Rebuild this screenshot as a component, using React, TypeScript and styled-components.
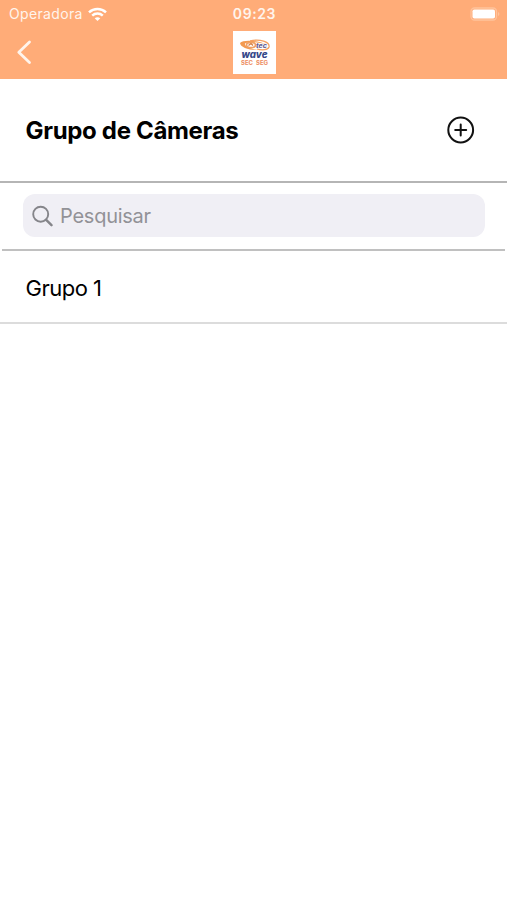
import React from "react";
import styled, { createGlobalStyle } from "styled-components";

const GlobalStyle = createGlobalStyle`
  * { box-sizing: border-box; }
  html, body, #root { margin: 0; height: 100%; background: #fff; }
  body { font-family: Inter, "Liberation Sans", sans-serif; color: #000; }
  svg { display: block; }
  button { border: 0; padding: 0; background: none; color: inherit; }
`;

const Screen = styled.div`
  display: flex;
  flex-direction: column;
  width: 100%;
  min-height: 100%;
  background: #fff;
`;

const Header = styled.header`
  height: 79px;
  flex: none;
  background: #ffac78;
  color: #fff4ec;
`;

const StatusBar = styled.div`
  display: grid;
  grid-template-columns: 1fr auto 1fr;
  align-items: center;
  height: 28px;
  padding: 0 7px 0 9px;
`;

const Carrier = styled.div`
  display: flex;
  align-items: center;
  gap: 5px;
  font-size: 14px;
  letter-spacing: 0.35px;
  line-height: 28px;
  white-space: nowrap;
`;

const Clock = styled.div`
  padding-bottom: 2px;
  font-size: 14px;
  font-weight: 600;
  letter-spacing: 0.6px;
`;

const BatterySlot = styled.div`
  display: flex;
  justify-content: flex-end;
  padding-bottom: 1px;
`;

const NavBar = styled.nav`
  display: grid;
  grid-template-columns: 1fr auto 1fr;
  height: 51px;
  padding: 3px 16px 0;
`;

const BackButton = styled.button`
  justify-self: start;
  align-self: start;
  margin-top: 8px;
`;

const Logo = styled.div`
  width: 43px;
  height: 43px;
  margin-left: 1px;
  background: #fff;
`;

const TitleRow = styled.section`
  display: flex;
  align-items: center;
  justify-content: space-between;
  height: 104px;
  padding: 0 32px 1px 25.5px;
  border-bottom: 2px solid #b5b5b5;
`;

const Title = styled.h1`
  margin: 0;
  padding-top: 2px;
  font-size: 24px;
  font-weight: 700;
  letter-spacing: -0.32px;
  line-height: 30px;
`;

const SearchArea = styled.div`
  height: 68px;
  margin: 0 2px;
  padding: 11px 20px 0 21px;
  border-bottom: 2px solid #c0c0c0;
`;

const SearchField = styled.label`
  display: flex;
  align-items: center;
  gap: 7px;
  height: 43px;
  padding-left: 9px;
  border-radius: 12px;
  background: #f0eff5;
  color: #85858a;
`;

const Placeholder = styled.span`
  padding-top: 1px;
  font-size: 20px;
  letter-spacing: -0.25px;
  color: #929297;
`;

const GroupRow = styled.div`
  display: flex;
  align-items: center;
  height: 73px;
  padding: 2px 25.5px 0;
  border-bottom: 2px solid #dcdcdc;
  font-size: 22px;
  letter-spacing: -0.5px;
`;

const WifiIcon = () => (
  <svg width="19" height="15" viewBox="0 0 19 15" fill="none" stroke="#fff" strokeWidth="2.5">
    <path d="M1 5.3C5.8.8 13.2.8 18 5.3" />
    <path d="M4.2 8.7C7.2 5.9 11.8 5.9 14.8 8.7" />
    <path d="M6.7 11.2C8.4 9.8 10.6 9.8 12.3 11.2L9.5 14Z" fill="#fff" stroke="none" />
  </svg>
);

const BatteryIcon = () => (
  <svg width="30" height="14" viewBox="0 0 30 14">
    <rect x="1" y="1" width="25.5" height="12" rx="3.5" fill="none" stroke="#ffc39c" strokeWidth="1.3" />
    <rect x="2.5" y="2.5" width="22.5" height="9" rx="1.8" fill="#fff" />
    <path d="M28 5v4q1.4-.6 1.4-2T28 5Z" fill="#ffc39c" />
  </svg>
);

const BackIcon = () => (
  <svg width="16" height="26" viewBox="0 0 16 26" fill="none" stroke="#fff4ec" strokeWidth="2.8" strokeLinecap="round" strokeLinejoin="round">
    <path d="M13.5 3L2.8 13.2L13.5 23.5" />
  </svg>
);

const WaveLogo = () => (
  <svg width="43" height="43" viewBox="0 0 43 43">
    <path d="M7 12C10 8.5 23 9 34 13.5C25 11 15 10.5 12 12.5C11 15 18 18 25 19C16 19.5 7 16 7 12Z" fill="#f39a50" />
    <path d="M17 10C27 7.5 37 11 36 16C35 19 29 19.5 24 18" fill="none" stroke="#f4a061" strokeWidth="1.3" />
    <ellipse cx="18" cy="14" rx="4.5" ry="2.6" fill="none" stroke="#f0a064" strokeWidth="1.7" />
    <path d="M15.5 14.5l2.5-2 2 2" fill="none" stroke="#d67c3c" strokeWidth="1.3" />
    <g fontFamily="Inter, sans-serif" fontWeight="800">
      <text x="23" y="17" fontSize="5.5" fontStyle="italic" fill="#665d91" textLength="11" lengthAdjust="spacingAndGlyphs">tec</text>
      <text x="8.5" y="27.2" fontSize="9.5" fontStyle="italic" fill="#354889" textLength="26" lengthAdjust="spacingAndGlyphs">wave</text>
      <text x="8" y="34" fontSize="6" fontWeight="700" fill="#ed8b60" textLength="12">SEC</text>
      <text x="23" y="34" fontSize="6" fontWeight="700" fill="#ed8b60" textLength="12">SEG</text>
    </g>
  </svg>
);

const SearchIcon = () => (
  <svg width="21" height="22" viewBox="0 0 21 22" fill="none" stroke="currentColor" strokeWidth="1.9" strokeLinecap="round">
    <circle cx="8.7" cy="9.2" r="7.5" />
    <path d="M14.2 14.8L19.5 20.2" strokeWidth="2.4" />
  </svg>
);

const AddIcon = () => (
  <svg width="28" height="28" viewBox="0 0 28 28" fill="none" stroke="#111" strokeWidth="2" strokeLinecap="round">
    <circle cx="13.7" cy="14" r="12.4" />
    <path d="M13.7 8.5v11M8.2 14h11" />
  </svg>
);

export default function App() {
  return (
    <Screen>
      <GlobalStyle />
      <Header>
        <StatusBar>
          <Carrier>Operadora<WifiIcon /></Carrier>
          <Clock>09:23</Clock>
          <BatterySlot><BatteryIcon /></BatterySlot>
        </StatusBar>
        <NavBar>
          <BackButton aria-label="Voltar"><BackIcon /></BackButton>
          <Logo><WaveLogo /></Logo>
        </NavBar>
      </Header>
      <TitleRow>
        <Title>Grupo de Câmeras</Title>
        <button aria-label="Adicionar grupo"><AddIcon /></button>
      </TitleRow>
      <SearchArea>
        <SearchField><SearchIcon /><Placeholder>Pesquisar</Placeholder></SearchField>
      </SearchArea>
      <GroupRow>Grupo 1</GroupRow>
    </Screen>
  );
}
